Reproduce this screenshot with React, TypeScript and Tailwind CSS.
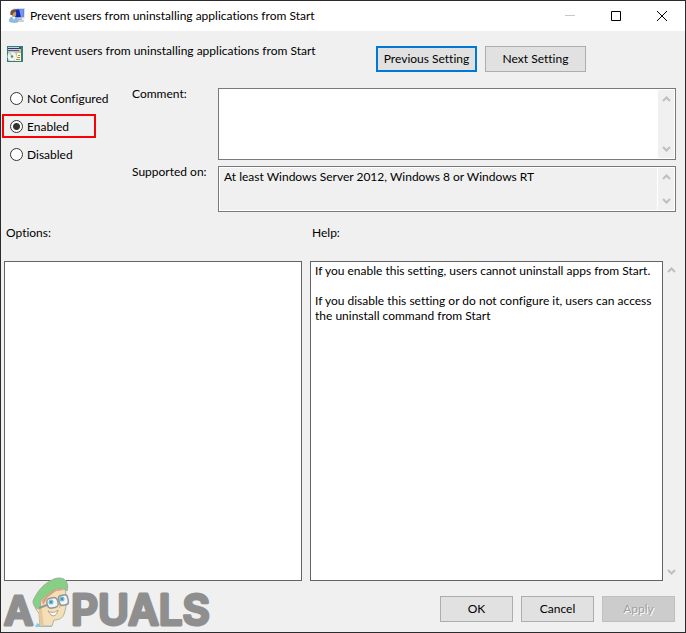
import React from "react";

const FONT = "font-['Lato','Noto_Sans',sans-serif] [font-variant-ligatures:none]";

function Chevron({ down = false }: { down?: boolean }) {
  return (
    <svg width="9" height="6" viewBox="0 0 9 6" fill="none" stroke="#bfbfbf" strokeWidth="2" aria-hidden="true">
      {down ? <path d="M1 1l3.500 3.500L8 1" /> : <path d="M1 5l3.500-3.500L8 5" />}
    </svg>
  );
}

function ScrollBar({ className = "" }: { className?: string }) {
  return (
    <div className={`flex shrink-0 flex-col items-center justify-between bg-[#f0f0f0] ${className}`}>
      <Chevron />
      <Chevron down />
    </div>
  );
}

function PolicyUserIcon() {
  return (
    <svg width="16" height="16" viewBox="0 0 16 16" aria-hidden="true">
      <path d="M4 .5l12-.5-.5 10.500-9 .5z" fill="#d3d9df" />
      <path d="M5 1.500l9.800-.5-.3 8L6 9.500z" fill="#1228b8" />
      <path d="M10 1.300l4.800-.3-.3 8-2.500.2z" fill="#6f98f2" />
      <path d="M9 10.500h4l.5 2.500H9z" fill="#aeb6bb" />
      <path d="M8 12h7v2H8z" fill="#cdd2d5" />
      <path d="M0 13.500c0-4 2-5 4.500-5s4.800 1.500 5 5.500c-2 1.300-7.500 1.300-9.500-.5z" fill="#86bce4" />
      <path d="M3 9l2 3 1.500-3z" fill="#eef5fa" />
      <ellipse cx="4.800" cy="5.700" rx="2.400" ry="3.100" fill="#c89a6e" />
      <path d="M1.500 7C.8 3 2.500 1.500 5 1.500c1.700.2 2.300 1.200 2.200 2.500-2-.3-3 .3-3.700 3z" fill="#6b563f" />
    </svg>
  );
}

function SettingIcon() {
  return (
    <svg width="16" height="16" viewBox="0 0 16 16" aria-hidden="true">
      <path d="M0 0h16v16H0z" fill="#2f7f7c" />
      <path d="M1 1h13v4H1z" fill="#c9ced8" />
      <path d="M1 2h11v1H1z" fill="#303a77" />
      <path d="M12 1h2v2h-2z" fill="#4b5067" />
      <path d="M1 5h13v10H1z" fill="#b9bec0" />
      <path d="M1 4h13v1H1z" fill="#555c64" />
      <path d="M12 4h2v2h-2z" fill="#e9b93e" />
      <circle cx="5" cy="10.500" r="4.500" fill="#eff3ee" />
      <path d="M2 8l3 2-1-4z" fill="#bdd9ad" />
      <circle cx="5" cy="10.500" r="1.200" fill="#657e7d" />
      <path d="M10 7h4v8H8v-4h2z" fill="#fff6d4" />
      <path d="M11 9h2v1h-2zM10 11h3v1h-3zM9 13h4v1H9z" fill="#a58d55" />
    </svg>
  );
}

function Watermark() {
  return (
    <svg className="-mt-5 shrink-0 overflow-visible" width="212" height="56" viewBox="0 0 212 56" role="img" aria-label="Appuals">
      <g
        fill="#8f8f8f"
        stroke="#8f8f8f"
        strokeWidth="3"
        strokeLinejoin="round"
        fontFamily="Inter, sans-serif"
        fontWeight="600"
      >
        <text x="1" y="49" fontSize="40">A</text>
        <text x="68" y="49" fontSize="42">PUALS</text>
      </g>
      <path d="M32 51l2-4 4 2 8-1 3 3z" fill="#8ccbe8" />
      <path d="M33 24l4-4 9-8 16-3 1 12c1 5 0 12-2 17-1 4-5 6-10 6l-2 6H37l-1-13c-4-3-5-8-3-13z" fill="#f4dfb6" stroke="#b5aea4" />
      <path d="M37 25l2 9 2 16h-4l-1-14z" fill="#e8c79c" />
      <path d="M30 25c3-7 8-15 17-20 6-4 13-4 16 0 2 3 2 7 1 10-4-4-10-3-15 0-5 4-9 7-11 9l-1 9c-4 0-7-3-7-8z" fill="#86d086" stroke="#a3aba3" />
      <path d="M39 24l10-9c4-2 8-3 13-1l-9 1-8 6-5 8z" fill="#d5a27a" />
      <path d="M36 32l8-3" stroke="#929799" strokeWidth="2" />
      <rect x="44" y="22" width="11" height="10" rx="4" fill="#f2f5f5" stroke="#929799" strokeWidth="1.500" transform="rotate(-12 49 27)" />
      <rect x="56" y="19" width="9" height="10" rx="3" fill="#f2f5f5" stroke="#929799" strokeWidth="1.500" transform="rotate(-12 61 24)" />
      <circle cx="48" cy="26" r="2.500" fill="#72bcd6" />
      <circle cx="48" cy="26" r="1" fill="#4a7f94" />
      <circle cx="59" cy="23" r="2.500" fill="#72bcd6" />
      <circle cx="59" cy="23" r="1" fill="#4a7f94" />
      <path d="M54 27c3 1 4 3 2 5" fill="none" stroke="#cfae88" />
      <path d="M45 35c4 2 7 2 10-1-1 5-4 7-7 5z" fill="#fff" stroke="#b0a193" />
    </svg>
  );
}

function DialogButton({ children, className }: { children: React.ReactNode; className: string }) {
  return (
    <button type="button" className={`h-[26px] bg-[#e1e1e1] pb-[1px] ${className}`}>
      {children}
    </button>
  );
}

const states = ["Not Configured", "Enabled", "Disabled"];

export default function App() {
  return (
    <div className={`flex min-h-screen flex-col border border-[#2b2b2e] bg-[#f0f0f0] text-[12px] leading-[15px] text-black ${FONT}`}>
      <header className="flex h-[30px] shrink-0 items-center bg-white pl-2">
        <PolicyUserIcon />
        <h1 className="ml-[5px] flex-1 pb-[1px] whitespace-nowrap">Prevent users from uninstalling applications from Start</h1>
        <button type="button" disabled aria-label="Minimize" className="flex h-full w-[46px] items-center justify-center">
          <svg width="10" height="10" stroke="#c8c8c8"><path d="M0 4.500h10" /></svg>
        </button>
        <button type="button" aria-label="Maximize" className="flex h-full w-[46px] items-center justify-center">
          <svg width="10" height="10" fill="none" stroke="#000"><path d="M.5.5h9v9h-9z" /></svg>
        </button>
        <button type="button" aria-label="Close" className="flex h-full w-[46px] items-center justify-center">
          <svg width="10" height="10" stroke="#000"><path d="M0 0l10 10M10 0L0 10" /></svg>
        </button>
      </header>

      <main className="flex flex-1 flex-col">
        <section className="flex items-start pt-[15px] pr-[99px] pl-[6px]">
          <SettingIcon />
          <h2 className="-mt-[3px] ml-2 flex-1 whitespace-nowrap">Prevent users from uninstalling applications from Start</h2>
          <div className="flex gap-2">
            <DialogButton className="w-[101px] border-2 border-[#0078d7]">Previous Setting</DialogButton>
            <DialogButton className="w-[101px] border border-[#adadad]">Next Setting</DialogButton>
          </div>
        </section>

        <section className="mt-4 flex pr-[9px]">
          <fieldset aria-label="Policy state" className="-mt-[2px] flex w-[131px] shrink-0 flex-col items-start gap-1 pl-[1px]">
            {states.map((state) => (
              <label
                key={state}
                className={`flex h-6 items-center gap-1 border-2 pl-[6px] whitespace-nowrap ${
                  state === "Enabled" ? "w-[94px] border-[#fb0007]" : "border-transparent"
                }`}
              >
                <input
                  type="radio"
                  name="state"
                  defaultChecked={state === "Enabled"}
                  className="size-[13px] shrink-0 appearance-none rounded-full border border-[#333] bg-white checked:bg-[radial-gradient(circle,#333_3px,#fff_4px)]"
                />
                {state}
              </label>
            ))}
          </fieldset>

          <div className="grid flex-1 grid-cols-[86px_1fr] gap-y-[6px]">
            <label htmlFor="comment" className="-mt-[2px]">Comment:</label>
            <div className="flex h-[72px] border border-[#7a7a7a] bg-white p-[1px]">
              <textarea id="comment" className="min-w-0 flex-1 resize-none px-1 outline-none" />
              <ScrollBar className="w-4 py-[6px]" />
            </div>
            <label htmlFor="supported" className="-mt-[2px]">Supported on:</label>
            <div className="flex h-[46px] border border-[#7a7a7a] bg-white p-[1px]">
              <textarea
                id="supported"
                readOnly
                defaultValue="At least Windows Server 2012, Windows 8 or Windows RT"
                className="mr-[1px] min-w-0 flex-1 resize-none overflow-hidden bg-[#f0f0f0] px-1 pt-[1px] outline-none"
              />
              <ScrollBar className="w-4 py-[6px]" />
            </div>
          </div>
        </section>

        <section className="mt-[13px] grid flex-1 grid-cols-[298fr_371fr] grid-rows-[36px_1fr] gap-x-2 pr-1 pl-[3px]">
          <h3 className="pl-[2px]">Options:</h3>
          <h3 className="pl-[2px]">Help:</h3>
          <div className="border border-[#646464] bg-white" />
          <div className="flex">
            <div className="flex-1 border border-[#646464] bg-white px-1 pt-[1px]">
              <p>If you enable this setting, users cannot uninstall apps from Start.</p>
              <p className="mt-[15px]">If you disable this setting or do not configure it, users can access the uninstall command from Start</p>
            </div>
            <ScrollBar className="w-4 py-[6px]" />
            <div className="w-[2px]" />
          </div>
        </section>

        <footer className="flex h-[51px] items-start justify-between pt-[15px] pr-[10px] pl-[2px]">
          <Watermark />
          <div className="flex gap-2">
            <DialogButton className="w-[73px] border border-[#adadad]">OK</DialogButton>
            <DialogButton className="w-[73px] border border-[#adadad]">Cancel</DialogButton>
            <button type="button" disabled className="h-[26px] w-[73px] border border-[#bfbfbf] bg-[#cccccc] pb-[1px] text-[#a0a0a0] [text-shadow:1px_1px_0_#fff]">
              Apply
            </button>
          </div>
        </footer>
      </main>
    </div>
  );
}
